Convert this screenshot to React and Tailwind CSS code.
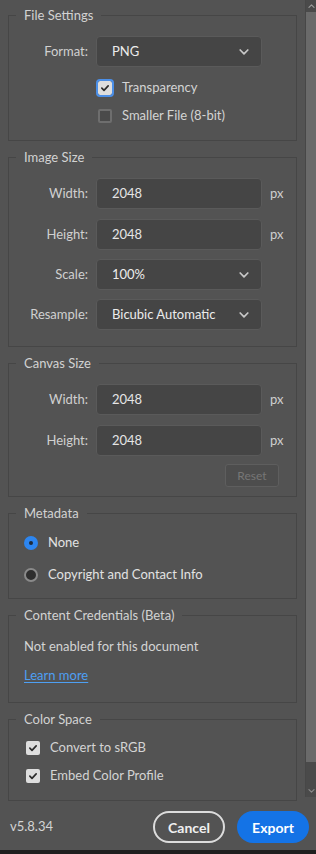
import React from 'react';

function Chevron({ className }) {
  return (
    <svg viewBox="0 0 10 6" className={className}>
      <path d="M1.2 1l3.8 3.8L8.8 1" fill="none" stroke="currentColor" strokeWidth="1.7" strokeLinecap="round" strokeLinejoin="round" />
    </svg>
  );
}

function Check({ on, focus }) {
  if (!on) {
    return <span className="w-[14px] h-[14px] rounded-[2px] border-2 border-[#6e6e6e] bg-[#4a4a4a] shrink-0" />;
  }
  return (
    <span className={`w-[14px] h-[14px] rounded-[2px] bg-[#dedede] flex items-center justify-center shrink-0 ${focus ? 'outline-2 outline-[#4b8fe8]' : ''}`}>
      <svg viewBox="0 0 12 12" className="w-[10px] h-[10px]">
        <path d="M2.2 6.2l2.6 2.6L9.8 3.4" fill="none" stroke="#2c2c2c" strokeWidth="2" strokeLinecap="round" strokeLinejoin="round" />
      </svg>
    </span>
  );
}

function Group({ title, className = '', children }) {
  return (
    <fieldset className={`mx-2 border border-[#464646] ${className}`}>
      <legend className="ml-[7px] px-2 text-[13px] leading-[18px] text-[#d2d2d2]">{title}</legend>
      {children}
    </fieldset>
  );
}

function Field({ label, value, select, unit, className = '' }) {
  return (
    <div className={`flex items-center ${className}`}>
      <span className="w-[79px] text-right text-[13px] text-[#d0d0d0]">{label}</span>
      <div className="ml-2 w-[166px] h-[31px] rounded-[4px] bg-[#454545] border border-[#5a5a5a] flex items-center justify-between pl-[15px] pr-[12px]">
        <span className={`text-[13px] ${select ? 'text-[#ececec]' : 'text-[#e6e6e6]'}`}>{value}</span>
        {select && <Chevron className="w-[10px] h-[6px] text-[#c8c8c8]" />}
      </div>
      {unit && <span className="ml-2 text-[13px] text-[#cfcfcf]">{unit}</span>}
    </div>
  );
}

export default function App() {
  return (
    <div className="w-[316px] h-[854px] bg-[#535353] flex flex-col font-[Lato,'Noto_Sans',sans-serif] select-none overflow-hidden">
      <div className="h-[797px] flex">
        <div className="w-[305px] pt-[6px] flex flex-col gap-[7px]">
          <Group title="File Settings" className="pb-[14px]">
            <Field label="Format:" value="PNG" select className="mt-[12px]" />
            <div className="mt-[11px] ml-[89px] h-5 flex items-center gap-[10px]">
              <Check on focus />
              <span className="text-[13px] text-[#d4d4d4]">Transparency</span>
            </div>
            <div className="mt-[8px] ml-[89px] h-5 flex items-center gap-[10px]">
              <Check />
              <span className="text-[13px] text-[#d4d4d4]">Smaller File (8-bit)</span>
            </div>
          </Group>

          <Group title="Image Size" className="pb-[16px]">
            <Field label="Width:" value="2048" unit="px" className="mt-[12px]" />
            <Field label="Height:" value="2048" unit="px" className="mt-[10px]" />
            <Field label="Scale:" value="100%" select className="mt-[9px]" />
            <Field label="Resample:" value="Bicubic Automatic" select className="mt-[9px]" />
          </Group>

          <Group title="Canvas Size" className="pb-[9px]">
            <Field label="Width:" value="2048" unit="px" className="mt-[12px]" />
            <Field label="Height:" value="2048" unit="px" className="mt-[10px]" />
            <div className="mt-[8px] flex justify-end pr-[17px]">
              <button className="w-[54px] h-[23px] rounded-[3px] bg-[#4d4d4d] border border-[#5e5e5e] text-[12px] text-[#767676]">Reset</button>
            </div>
          </Group>

          <Group title="Metadata" className="pb-[13px]">
            <div className="mt-[11px] ml-[15px] h-5 flex items-center gap-[10px]">
              <span className="w-[14px] h-[14px] rounded-full bg-[#2d86f0] flex items-center justify-center">
                <span className="w-[4px] h-[4px] rounded-full bg-[#1d2a3a]" />
              </span>
              <span className="text-[13px] text-[#e2e2e2]">None</span>
            </div>
            <div className="mt-[12px] ml-[15px] h-5 flex items-center gap-[10px]">
              <span className="w-[14px] h-[14px] rounded-full bg-[#2e2e2e] border-2 border-[#8a8a8a]" />
              <span className="text-[13px] text-[#e2e2e2]">Copyright and Contact Info</span>
            </div>
          </Group>

          <Group title="Content Credentials (Beta)" className="pb-[16px]">
            <div className="mt-[13px] ml-[15px] h-5 flex items-center text-[13px] text-[#d4d4d4]">Not enabled for this document</div>
            <div className="mt-[9px] ml-[15px] h-5 flex items-center">
              <a className="text-[13px] text-[#4e9ff2] underline underline-offset-2">Learn more</a>
            </div>
          </Group>

          <Group title="Color Space" className="pb-[14px]">
            <div className="mt-[10px] ml-[17px] h-5 flex items-center gap-[10px]">
              <Check on />
              <span className="text-[13px] text-[#d4d4d4]">Convert to sRGB</span>
            </div>
            <div className="mt-[8px] ml-[17px] h-5 flex items-center gap-[10px]">
              <Check on />
              <span className="text-[13px] text-[#d4d4d4]">Embed Color Profile</span>
            </div>
          </Group>
        </div>

        {/* scrollbar */}
        <div className="w-[11px] flex flex-col bg-[#4a4a4a] border-l border-[#474747]">
          <div className="h-[12px] flex items-center justify-center">
            <Chevron className="w-[7px] h-[4px] rotate-180 text-[#9a9a9a]" />
          </div>
          <div className="h-[750px] bg-[#6a6a6a]" />
          <div className="flex-1 flex items-end justify-center pb-[4px]">
            <Chevron className="w-[7px] h-[4px] text-[#8a8a8a]" />
          </div>
        </div>
      </div>

      <div className="h-[53px] flex items-start justify-between pl-[10px] pr-[7px] pt-[14px]">
        <span className="h-[32px] flex items-center text-[13px] text-[#d4d4d4]">v5.8.34</span>
        <div className="flex gap-[12px]">
          <button className="w-[72px] h-[32px] rounded-full border-2 border-[#dcdcdc] text-[14px] font-bold text-[#f0f0f0]">Cancel</button>
          <button className="w-[72px] h-[32px] rounded-full bg-[#1473e6] text-[14px] font-bold text-white">Export</button>
        </div>
      </div>
      <div className="h-[4px] bg-[#1f1f1f]" />
    </div>
  );
}
